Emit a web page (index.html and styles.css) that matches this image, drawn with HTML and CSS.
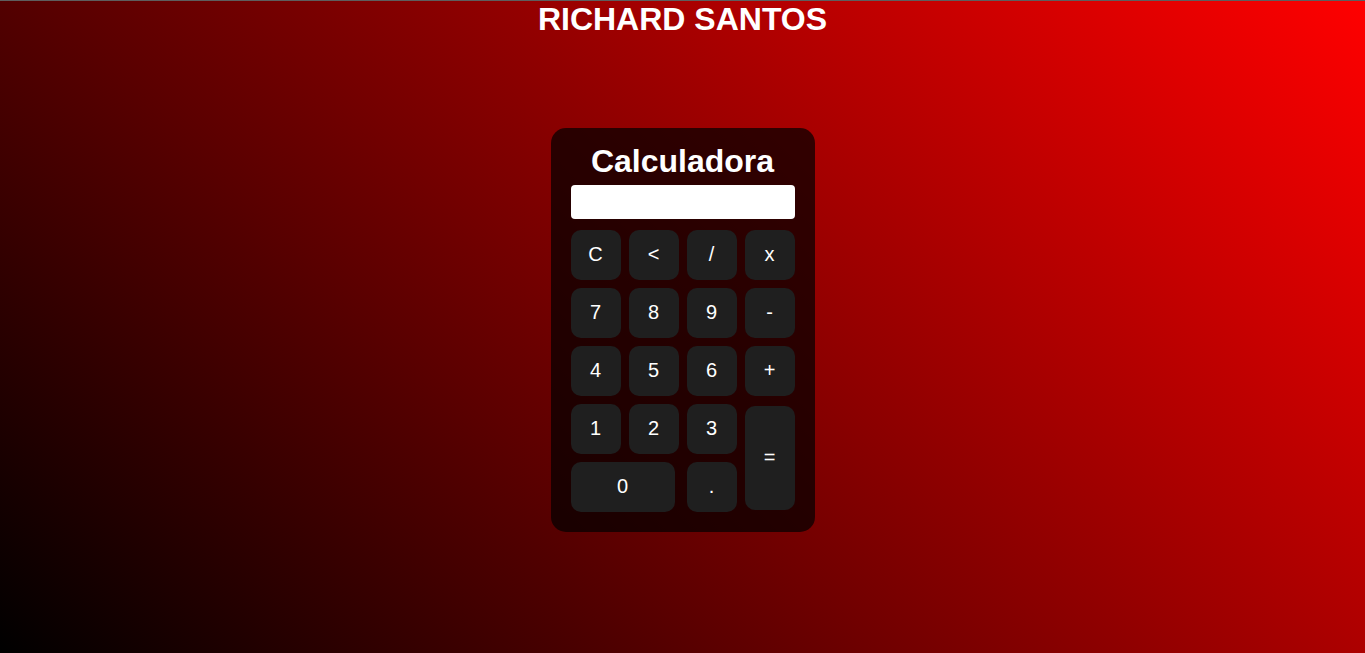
FILE: index.html
```html
<!DOCTYPE html>
<html lang="pt">
<head>
<meta charset="utf-8">
<title>Calculadora</title>
<link rel="stylesheet" href="styles.css">
</head>
<body>
<div class="page">
  <h1 class="owner">RICHARD SANTOS</h1>
  <div class="calc">
    <h2 class="calc-title">Calculadora</h2>
    <div class="display"></div>
    <div class="keys">
      <button class="key">C</button>
      <button class="key">&lt;</button>
      <button class="key">/</button>
      <button class="key">x</button>
      <button class="key">7</button>
      <button class="key">8</button>
      <button class="key">9</button>
      <button class="key">-</button>
      <button class="key">4</button>
      <button class="key">5</button>
      <button class="key">6</button>
      <button class="key">+</button>
      <button class="key">1</button>
      <button class="key">2</button>
      <button class="key">3</button>
      <button class="key key-eq">=</button>
      <button class="key key-zero">0</button>
      <button class="key">.</button>
    </div>
  </div>
</div>
</body>
</html>
```
FILE: styles.css
```css
html, body {
  margin: 0;
  padding: 0;
  height: 100%;
}
body {
  background: linear-gradient(45deg, #000000, #ff0000);
  font-family: "Liberation Sans", Arial, sans-serif;
  color: #ffffff;
  overflow: hidden;
}
.page {
  box-sizing: border-box;
  height: 100%;
  border-top: 1px solid #5e5e5e;
  display: flex;
  flex-direction: column;
  align-items: center;
}
.owner {
  margin: 0;
  font-size: 32px;
  font-weight: bold;
  line-height: 37px;
}
.calc {
  margin-top: 90px;
  width: 224px;
  padding: 15px 20px 20px;
  background: rgba(0, 0, 0, 0.7);
  border-radius: 15px;
  display: flex;
  flex-direction: column;
}
.calc-title {
  margin: 0 0 5px;
  text-align: center;
  font-size: 32px;
  font-weight: bold;
  line-height: 37px;
}
.display {
  height: 34px;
  background: #ffffff;
  border-radius: 4px;
  margin-bottom: 11px;
}
.keys {
  display: grid;
  grid-template-columns: repeat(4, 50px);
  grid-auto-rows: 50px;
  gap: 8px;
}
.key {
  width: 50px;
  height: 50px;
  border: none;
  border-radius: 10px;
  background: #1f1f1f;
  color: #ffffff;
  font-family: "Liberation Sans", Arial, sans-serif;
  font-size: 20px;
  padding: 0 0 2px;
}
.key-eq {
  grid-column: 4;
  grid-row: 4 / span 2;
  height: 104px;
  align-self: center;
}
.key-zero {
  grid-column: 1 / span 2;
  width: 104px;
}
```
